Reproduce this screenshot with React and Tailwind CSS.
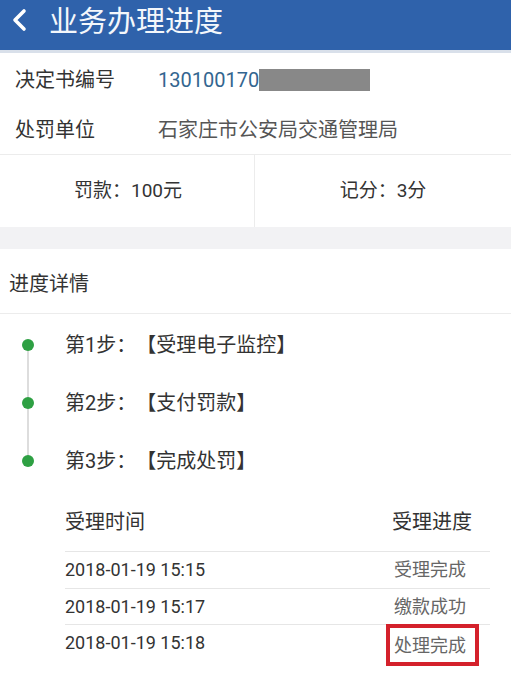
import React from "react";

const font = { fontFamily: "Roboto, 'Noto Sans CJK SC', 'Noto Sans', sans-serif" };

const steps = ["第1步：【受理电子监控】", "第2步：【支付罚款】", "第3步：【完成处罚】"];

const records = [
  { time: "2018-01-19 15:15", status: "受理完成" },
  { time: "2018-01-19 15:17", status: "缴款成功" },
  { time: "2018-01-19 15:18", status: "处理完成", marked: true },
];

function Header() {
  return (
    <div className="h-[53px] bg-[#2f62ab] border-b-[3px] border-[#d9e0ea] flex items-center pb-[6px]">
      <svg width="40" height="30" viewBox="0 0 40 30" className="ml-[4px] shrink-0">
        <path d="M20 4 L11 13 L20 22" fill="none" stroke="#ffffff" strokeWidth="3.6" strokeLinecap="round" strokeLinejoin="round" />
      </svg>
      <h1 className="ml-[5px] text-[29px] leading-none text-[#f4f7fb]">业务办理进度</h1>
    </div>
  );
}

function InfoRow({ label, children, className }) {
  return (
    <div className={"flex items-center pl-[15px] " + className}>
      <span className="w-[143px] text-[20px] text-[#333333]">{label}</span>
      {children}
    </div>
  );
}

export default function App() {
  return (
    <div className="w-[511px] h-[690px] bg-white overflow-hidden [text-spacing-trim:space-all]" style={font}>
      <Header />

      <InfoRow label="决定书编号" className="h-[53px]">
        <span className="text-[20px] text-[#336690]">130100170</span>
        <span className="w-[111px] h-[22px] bg-[#888888]" />
      </InfoRow>
      <InfoRow label="处罚单位" className="h-[49px] border-b border-[#ececec]">
        <span className="text-[20px] text-[#555555]">石家庄市公安局交通管理局</span>
      </InfoRow>

      <div className="h-[72px] flex">
        <div className="w-[255px] border-r border-[#ececec] flex items-center justify-center text-[19px] text-[#333333] pl-[2px]">
          罚款：100元
        </div>
        <div className="flex-1 flex items-center justify-center text-[19px] text-[#333333]">记分：3分</div>
      </div>

      <div className="h-[22px] bg-[#f2f2f4]" />

      <div className="h-[65px] flex items-center pl-[9px] pt-[6px] border-b border-[#ececec] text-[20px] text-[#333333]">
        进度详情
      </div>

      <div className="relative pt-[2px]">
        <div className="absolute left-[27px] top-[31px] w-[2px] h-[116px] bg-[#dddddd]" />
        {steps.map((s) => (
          <div key={s} className="h-[58px] flex items-center">
            <span className="relative ml-[22px] w-[12px] h-[12px] rounded-full bg-[#2ea043]" />
            <span className="ml-[31px] text-[20px] text-[#333333]">{s}</span>
          </div>
        ))}
      </div>

      <div className="ml-[65px] w-[425px]">
        <div className="h-[61px] flex items-center justify-between pt-[2px] pr-[18px] text-[20px] text-[#333333]">
          <span>受理时间</span>
          <span>受理进度</span>
        </div>
        {records.map((r) => (
          <div key={r.time} className="h-[36.5px] flex items-center justify-between border-t border-[#e6e6e6] pr-[24px]">
            <span className="text-[18px] text-[#333333]">{r.time}</span>
            {r.marked ? (
              <span className="border-4 border-[#d4212b] h-[42px] flex items-center pl-[4px] pr-[9px] -mr-[13px] mt-[5px] text-[18px] text-[#666666]">
                {r.status}
              </span>
            ) : (
              <span className="text-[18px] text-[#666666]">{r.status}</span>
            )}
          </div>
        ))}
      </div>
    </div>
  );
}
